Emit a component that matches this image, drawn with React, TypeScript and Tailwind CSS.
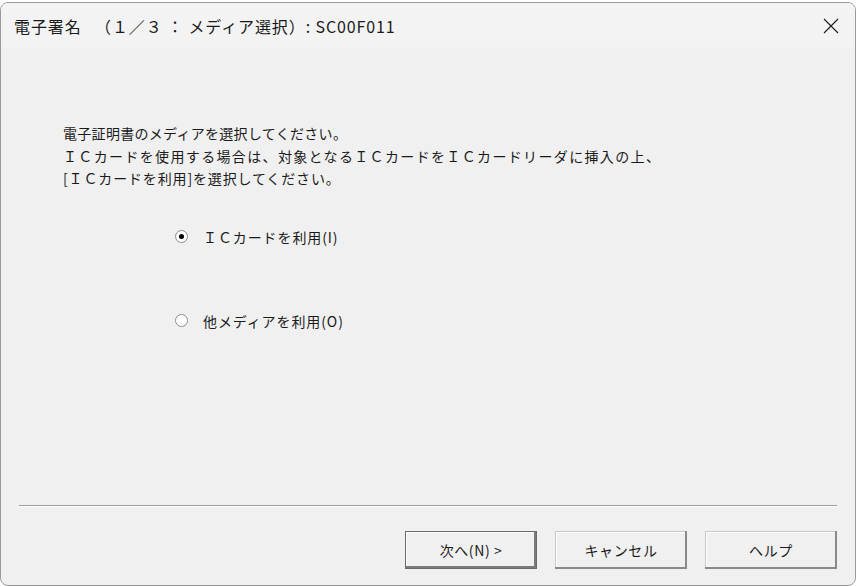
import type { ReactNode } from 'react'

const FONT = { fontFamily: '"Noto Sans CJK JP", "Noto Sans", sans-serif' }

function Radio({ checked, children }: { checked?: boolean; children: ReactNode }) {
  return (
    <div className="flex items-center gap-[15px]">
      <span className="flex h-[13px] w-[13px] items-center justify-center rounded-full border border-[#8c8c8c] bg-white">
        {checked && <span className="h-[5px] w-[5px] rounded-full bg-black" />}
      </span>
      <span className="text-[14px] leading-[20px] text-[#1a1a1a] tracking-[0.9px]">{children}</span>
    </div>
  )
}

function Button({ label, primary }: { label: string; primary?: boolean }) {
  return (
    <button
      className={`h-[38px] w-[132px] bg-[#f0f0f0] text-[14px] text-[#1a1a1a] tracking-[0.6px] ${
        primary
          ? 'border border-[#6a6a6a] shadow-[inset_-2px_-2px_0_#7a7a7a,inset_1px_1px_0_#ffffff]'
          : 'shadow-[inset_-2px_-2px_0_#8a8a8a,inset_1px_1px_0_#c8c8c8,inset_2px_2px_0_#ffffff]'
      }`}
    >
      {label}
    </button>
  )
}

export default function App() {
  return (
    <div className="h-[586px] w-[856px] overflow-hidden bg-white pt-[2px]" style={FONT}>
      {/* Dialog window */}
      <div className="flex h-[584px] w-[856px] flex-col overflow-hidden rounded-[8px] border border-[#9a9a9a] bg-[#f0f0f0]">
        {/* Title bar */}
        <div className="flex h-[45px] shrink-0 items-center justify-between bg-[#f3f3f3] pl-[13px] pr-[16px]">
          <div className="text-[16px] text-[#1a1a1a] tracking-[0.9px]">
            電子署名 　（１／３ ： メディア選択）: SC00F011
          </div>
          <svg width="16" height="16" viewBox="0 0 16 16" className="mt-[1px]">
            <path d="M1 1 L15 15 M15 1 L1 15" stroke="#1a1a1a" strokeWidth="1.1" />
          </svg>
        </div>

        {/* Body */}
        <div className="flex flex-1 flex-col">
          <div className="pl-[62px] pt-[74px] text-[14px] leading-[22.5px] text-[#1a1a1a]">
            <div className="tracking-[0.3px]">電子証明書のメディアを選択してください。</div>
            <div className="tracking-[1.35px]">ＩＣカードを使用する場合は、対象となるＩＣカードをＩＣカードリーダに挿入の上、</div>
            <div className="tracking-[0.85px]">[ＩＣカードを利用]を選択してください。</div>
          </div>

          <div className="flex flex-col gap-[64px] pl-[174px] pt-[37px]">
            <Radio checked>ＩＣカードを利用(I)</Radio>
            <Radio>他メディアを利用(O)</Radio>
          </div>

          <div className="flex-1" />

          {/* Separator */}
          <div className="mx-[18px] border-t border-b border-t-[#a0a0a0] border-b-white" />

          {/* Buttons */}
          <div className="flex justify-end gap-[18px] pb-[16px] pr-[18px] pt-[24px]">
            <Button label="次へ(N) >" primary />
            <Button label="キャンセル" />
            <Button label="ヘルプ" />
          </div>
        </div>
      </div>
    </div>
  )
}
